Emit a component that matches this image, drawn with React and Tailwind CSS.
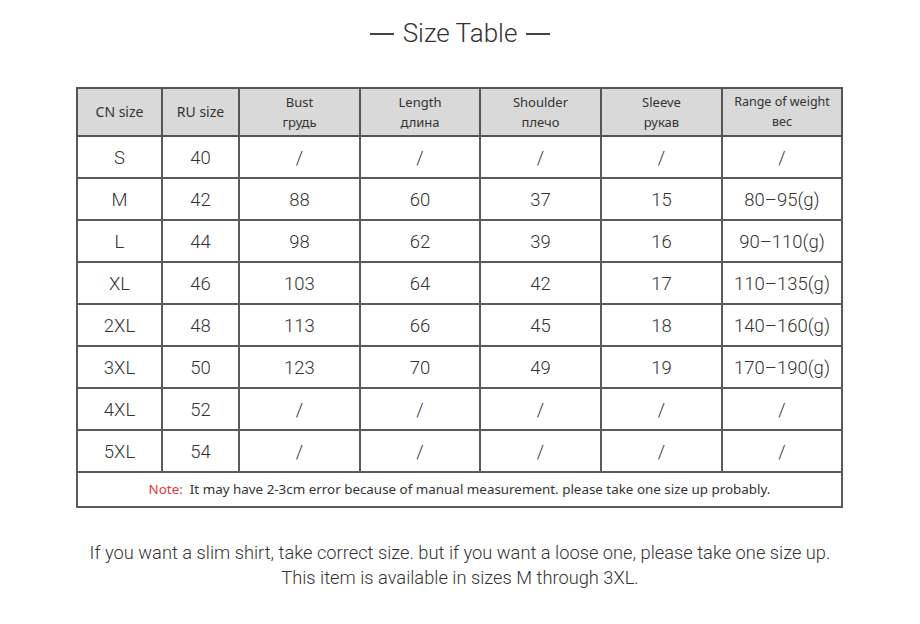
import React from 'react';

const rows = [
  ['S', '40', '/', '/', '/', '/', '/'],
  ['M', '42', '88', '60', '37', '15', '80–95(g)'],
  ['L', '44', '98', '62', '39', '16', '90–110(g)'],
  ['XL', '46', '103', '64', '42', '17', '110–135(g)'],
  ['2XL', '48', '113', '66', '45', '18', '140–160(g)'],
  ['3XL', '50', '123', '70', '49', '19', '170–190(g)'],
  ['4XL', '52', '/', '/', '/', '/', '/'],
  ['5XL', '54', '/', '/', '/', '/', '/'],
];

const heads = [
  ['CN size'],
  ['RU size'],
  ['Bust', 'грудь'],
  ['Length', 'длина'],
  ['Shoulder', 'плечо'],
  ['Sleeve', 'рукав'],
  ['Range of weight', 'вес'],
];

const widths = ['w-[85px]', 'w-[77px]', 'w-[121px]', 'w-[120px]', 'w-[121px]', 'w-[121px]', 'w-[120px]'];

export default function App() {
  return (
    <div className="w-[920px] h-[624px] bg-white text-[#333] overflow-hidden">
      {/* title */}
      <div className="pt-[19px] h-[87px] flex justify-center items-start gap-[9px] font-['Roboto','Liberation_Sans',sans-serif] font-light text-[26px] leading-[28px] text-[#333]">
        <span className="mt-[14px] w-[24px] h-[1.5px] bg-[#444]" />
        <span>Size Table</span>
        <span className="mt-[14px] w-[24px] h-[1.5px] bg-[#444]" />
      </div>

      {/* table */}
      <table className="ml-[76px] w-[767px] table-fixed border-collapse border-2 border-[#444]">
        <colgroup>
          {widths.map((w, i) => <col key={i} className={w} />)}
        </colgroup>
        <thead>
          <tr className="h-[48px] bg-[#d9d9d9]">
            {heads.map((h, i) => (
              <th
                key={i}
                className={`border-2 border-[#555] font-normal text-center align-middle font-['Noto_Sans','Open_Sans',sans-serif] leading-[20px] text-[#333] ${i === 6 ? 'text-[12.5px]' : i < 2 ? 'text-[14px]' : 'text-[13px]'}`}
              >
                {h.map((t, j) => <div key={j}>{t}</div>)}
              </th>
            ))}
          </tr>
        </thead>
        <tbody>
          {rows.map((r, i) => (
            <tr key={i} className="h-[42px]">
              {r.map((c, j) => (
                <td
                  key={j}
                  className="border-2 border-[#5a5a5a] pt-[3px] text-center align-middle font-['Roboto','Liberation_Sans',sans-serif] font-light text-[18.5px] text-[#333]"
                >
                  {c}
                </td>
              ))}
            </tr>
          ))}
          <tr className="h-[35px]">
            <td colSpan={7} className="border-2 border-[#5a5a5a] text-center align-middle font-['Noto_Sans','Open_Sans',sans-serif] text-[13.4px] text-[#333]">
              <span className="text-[#e0383d]">Note:</span>&nbsp; It may have 2-3cm error because of manual measurement. please take one size up probably.
            </td>
          </tr>
        </tbody>
      </table>

      {/* bottom text */}
      <div className="mt-[32px] text-center font-['Roboto','Liberation_Sans',sans-serif] font-light text-[18.3px] leading-[25px] text-[#333]">
        <div>If you want a slim shirt, take correct size. but if you want a loose one, please take one size up.</div>
        <div>This item is available in sizes M through 3XL.</div>
      </div>
    </div>
  );
}
